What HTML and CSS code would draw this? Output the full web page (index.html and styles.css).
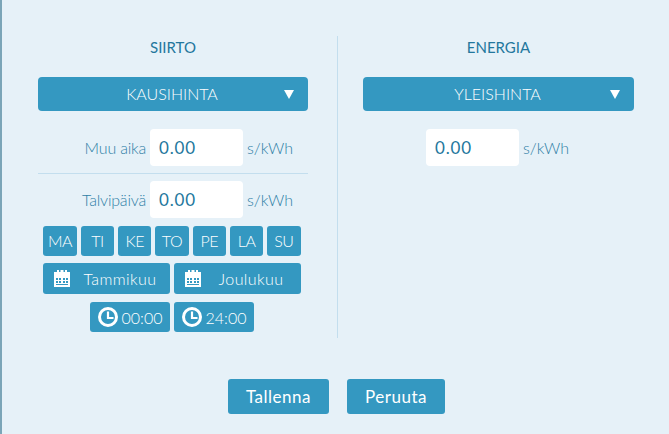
FILE: index.html
```html
<!DOCTYPE html>
<html lang="en">
  <head>
    <meta charset="UTF-8" />
    <title>Hinnat</title>
    <link rel="stylesheet" href="styles.css">
  </head>
  <body>
    <div class="dialog">
      <div class="columns">
        <div class="column column-left">
          <h2>SIIRTO</h2>
          <div class="select"><span>KAUSIHINTA</span><i class="arrow"></i></div>
          <div class="price-row">
            <label>Muu aika</label>
            <div class="price-input">0.00</div>
            <span class="unit">s/kWh</span>
          </div>
          <div class="price-row season-row">
            <label>Talvipäivä</label>
            <div class="price-input">0.00</div>
            <span class="unit">s/kWh</span>
          </div>
          <div class="btn-row days">
            <div class="btn day">MA</div>
            <div class="btn day">TI</div>
            <div class="btn day">KE</div>
            <div class="btn day">TO</div>
            <div class="btn day">PE</div>
            <div class="btn day">LA</div>
            <div class="btn day">SU</div>
          </div>
          <div class="btn-row months">
            <div class="btn month">
              <svg class="icon" viewBox="0 0 16 17"><path fill="#fff" fill-rule="evenodd" d="M3 0h2v2h1.500V0h3v2H11V0h2v2h3v15H0V2h3zM2 8v2h2V8zM5 8v2h2V8zM9 8v2h2V8zM12 8v2h2V8zM2 11v2h2v-2zM5 11v2h2v-2zM9 11v2h2v-2zM12 11v2h2v-2zM2 14v1h12v-1z"/></svg>
              <span>Tammikuu</span>
            </div>
            <div class="btn month">
              <svg class="icon" viewBox="0 0 16 17"><path fill="#fff" fill-rule="evenodd" d="M3 0h2v2h1.500V0h3v2H11V0h2v2h3v15H0V2h3zM2 8v2h2V8zM5 8v2h2V8zM9 8v2h2V8zM12 8v2h2V8zM2 11v2h2v-2zM5 11v2h2v-2zM9 11v2h2v-2zM12 11v2h2v-2zM2 14v1h12v-1z"/></svg>
              <span>Joulukuu</span>
            </div>
          </div>
          <div class="btn-row times">
            <div class="btn time">
              <svg class="clock" viewBox="0 0 20 20"><circle cx="10" cy="10" r="8.500" fill="none" stroke="#fff" stroke-width="3"/><path fill="none" stroke="#fff" stroke-width="2.200" d="M10 4.500V11H15.500"/></svg>
              <span>00:00</span>
            </div>
            <div class="btn time">
              <svg class="clock" viewBox="0 0 20 20"><circle cx="10" cy="10" r="8.500" fill="none" stroke="#fff" stroke-width="3"/><path fill="none" stroke="#fff" stroke-width="2.200" d="M10 4.500V11H15.500"/></svg>
              <span>24:00</span>
            </div>
          </div>
        </div>
        <div class="column column-right">
          <h2>ENERGIA</h2>
          <div class="select"><span>YLEISHINTA</span><i class="arrow"></i></div>
          <div class="price-row single">
            <div class="price-input">0.00</div>
            <span class="unit">s/kWh</span>
          </div>
        </div>
      </div>
      <div class="actions">
        <div class="btn action save">Tallenna</div>
        <div class="btn action cancel">Peruuta</div>
      </div>
    </div>
  </body>
</html>
```

FILE: styles.css
```css
html,
body {
  margin: 0;
  height: 100%;
  overflow: hidden;
}

body {
  font-family: "Lato", "Noto Sans", sans-serif;
  background: #e6f1f8;
  color: #2f7fa6;
}

.dialog {
  height: 434px;
  box-sizing: border-box;
  border-left: 2px solid #7ba5b8;
  padding-top: 36px;
}

.columns {
  display: flex;
  height: 302px;
}

.column {
  box-sizing: border-box;
}

.column-left {
  width: 336px;
  padding-left: 36px;
  padding-right: 29px;
  border-right: 1px solid #c3deee;
}

.column-right {
  padding-left: 25px;
  width: 296px;
}

h2 {
  margin: 0;
  height: 41px;
  line-height: 22px;
  font-size: 15px;
  font-weight: 400;
  text-align: center;
  color: #23779d;
}

.select {
  position: relative;
  height: 34px;
  line-height: 34px;
  background: #3498c1;
  border-radius: 4px;
  color: #fff;
  font-size: 16px;
  font-weight: 300;
  text-align: center;
}

.select span {
  display: block;
  padding-right: 2px;
}

.arrow {
  position: absolute;
  right: 14px;
  top: 13px;
  width: 0;
  height: 0;
  border-left: 5px solid transparent;
  border-right: 5px solid transparent;
  border-top: 9px solid #fff;
}

.price-row {
  display: flex;
  align-items: center;
  height: 37px;
  margin-top: 18px;
  padding-bottom: 7px;
  border-bottom: 1px solid #c3deee;
}

.price-row label {
  width: 108px;
  text-align: right;
  font-size: 16px;
  font-weight: 300;
  letter-spacing: -0.2px;
  margin-right: 4px;
}

.price-input {
  box-sizing: border-box;
  width: 93px;
  height: 37px;
  line-height: 37px;
  padding-left: 9px;
  background: #fff;
  border-radius: 4px;
  color: #23779d;
  font-size: 17px;
  letter-spacing: 0.8px;
}

.unit {
  margin-left: 4px;
  font-size: 16px;
  font-weight: 300;
}

.season-row {
  margin-top: 7px;
  padding-bottom: 0;
  border-bottom: none;
}

.single {
  border-bottom: none;
  padding-left: 63px;
}

.btn {
  background: #3498c1;
  color: #fff;
  border-radius: 3px;
  text-align: center;
  box-sizing: border-box;
}

.btn-row {
  display: flex;
  justify-content: center;
  gap: 4px;
  padding-right: 2px;
}

.days {
  margin-top: 8px;
}

.day {
  width: 33.300px;
  height: 30px;
  line-height: 30px;
  font-size: 16px;
  font-weight: 300;
  letter-spacing: -0.5px;
}

.months {
  margin-top: 7px;
}

.month {
  display: flex;
  align-items: center;
  padding-left: 11px;
  width: 127px;
  height: 31px;
  font-size: 16px;
  font-weight: 300;
  letter-spacing: 0.4px;
}

.month span {
  flex: 1;
}

.icon {
  width: 16px;
  height: 17px;
}

.times {
  margin-top: 8px;
}

.time {
  display: flex;
  align-items: center;
  justify-content: center;
  gap: 4px;
  width: 80px;
  height: 30px;
  font-size: 16px;
  font-weight: 300;
}

.clock {
  width: 20px;
  height: 20px;
}

.actions {
  display: flex;
  justify-content: center;
  gap: 18px;
  margin-top: 41px;
  padding-left: 2px;
}

.action {
  height: 35px;
  line-height: 35px;
  font-size: 17px;
  letter-spacing: 0.5px;
}

.save {
  width: 101px;
}

.cancel {
  width: 98px;
}
```
